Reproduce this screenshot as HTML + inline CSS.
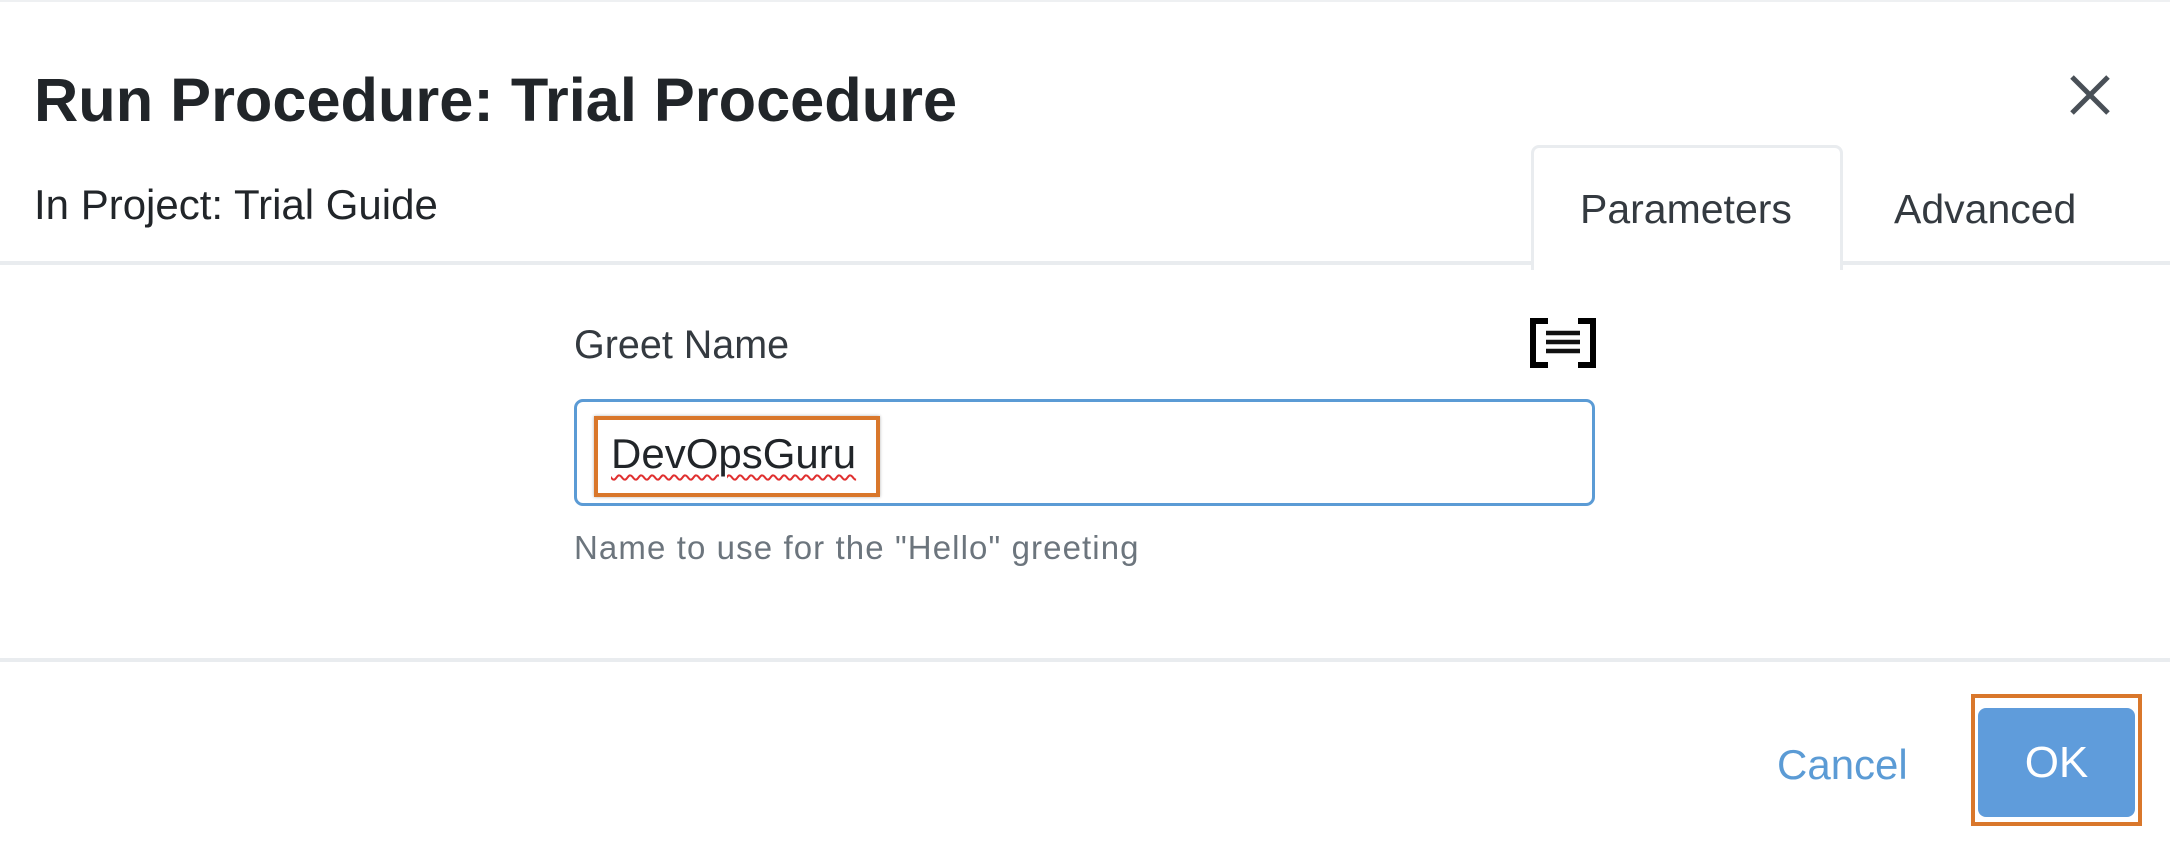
<!DOCTYPE html>
<html><head><meta charset="utf-8"><style>
html,body{margin:0;padding:0;width:2170px;height:845px;background:#fff;overflow:hidden;font-family:"Liberation Sans",sans-serif;color:#212529}
.a{position:absolute;white-space:nowrap}
</style></head><body>
<div class="a" style="left:0;top:0;width:2170px;height:2px;background:#eef0f2"></div>
<div class="a" style="left:34px;top:64px;font-size:61.3px;font-weight:bold;line-height:72px">Run Procedure: Trial Procedure</div>
<svg class="a" style="left:2068px;top:75px" width="44" height="40" viewBox="0 0 44 40"><path d="M4 2 L40 38 M40 2 L4 38" stroke="#495057" stroke-width="5" fill="none"/></svg>
<div class="a" style="left:34px;top:181px;font-size:42px;line-height:48px">In Project: Trial Guide</div>
<div class="a" style="left:0;top:261px;width:2170px;height:4px;background:#e9ecef"></div>
<div class="a" style="left:1531px;top:145px;width:306px;height:122px;border:3px solid #e9ecef;border-bottom:none;border-radius:8px 8px 0 0;background:#fff"></div>
<div class="a" style="left:1580px;top:185px;font-size:41px;line-height:48px;color:#343a40">Parameters</div>
<div class="a" style="left:1894px;top:185px;font-size:41px;line-height:48px;color:#343a40">Advanced</div>
<div class="a" style="left:574px;top:322px;font-size:39.5px;line-height:46px;color:#343a40">Greet Name</div>
<svg class="a" style="left:1530px;top:318px" width="66" height="50" viewBox="0 0 66 50"><path d="M18 3 H3 V47 H18 M48 3 H63 V47 H48" stroke="#000" stroke-width="6" fill="none"/><path d="M16 15 H50 M16 24 H50 M16 33 H50" stroke="#111" stroke-width="4.5"/></svg>
<div class="a" style="left:574px;top:399px;width:1015px;height:101px;border:3px solid #5b9bd5;border-radius:9px"></div>
<div class="a" style="left:594px;top:416px;width:278px;height:73px;border:4px solid #d9772b;box-shadow:0 0 3px rgba(0,0,0,.3)"></div>
<div class="a" style="left:611px;top:429px;font-size:42px;line-height:50px;color:#212529;text-decoration:underline wavy #e03030;text-decoration-thickness:2px;text-underline-offset:6px">DevOpsGuru</div>
<div class="a" style="left:574px;top:528px;font-size:33px;line-height:40px;color:#6c757d;letter-spacing:1.1px">Name to use for the "Hello" greeting</div>
<div class="a" style="left:0;top:658px;width:2170px;height:4px;background:#e9ecef"></div>
<div class="a" style="left:1777px;top:740px;font-size:42px;line-height:50px;color:#5b9bd5">Cancel</div>
<div class="a" style="left:1971px;top:694px;width:163px;height:124px;border:4px solid #d9772b"></div>
<div class="a" style="left:1978px;top:708px;width:157px;height:109px;background:#5f9cdb;border-radius:8px;color:#fff;font-size:44px;line-height:109px;text-align:center">OK</div>
</body></html>
